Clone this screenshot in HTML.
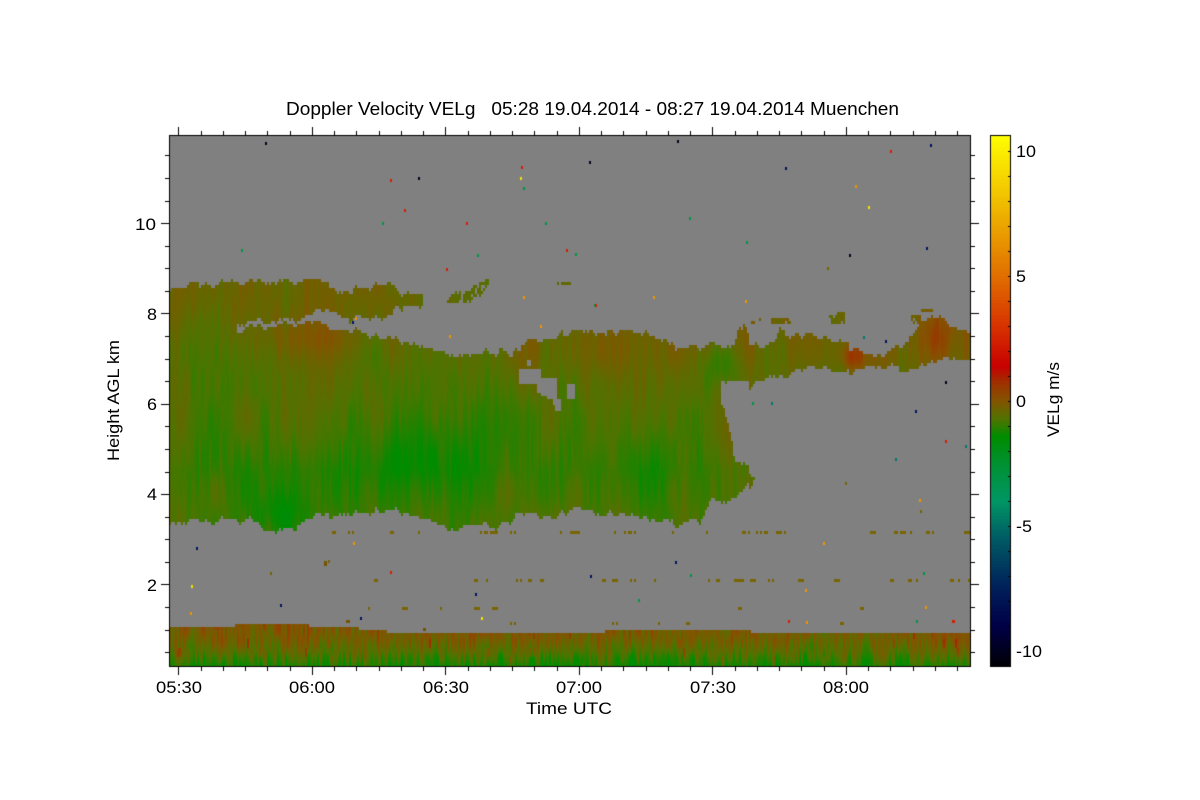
<!DOCTYPE html>
<html lang="en">
<head>
<meta charset="utf-8">
<title>Doppler Velocity VELg</title>
<style>
html,body{margin:0;padding:0;background:#fff;width:1200px;height:800px;overflow:hidden}
#c,#t{position:absolute;left:0;top:0;width:1200px;height:800px}
text{font-family:"Liberation Sans",sans-serif;fill:#000;font-size:17px}
</style>
</head>
<body>
<canvas id="c" width="1200" height="800"></canvas>
<svg id="t" viewBox="0 0 1200 800" xmlns="http://www.w3.org/2000/svg">
<text x="286" y="115" style="font-size:18px" textLength="613" lengthAdjust="spacingAndGlyphs" xml:space="preserve">Doppler Velocity VELg   05:28 19.04.2014 - 08:27 19.04.2014 Muenchen</text>
<text x="135" y="230" textLength="21" lengthAdjust="spacingAndGlyphs">10</text>
<text x="147" y="320" textLength="10" lengthAdjust="spacingAndGlyphs">8</text>
<text x="147" y="410" textLength="10" lengthAdjust="spacingAndGlyphs">6</text>
<text x="147" y="500" textLength="10" lengthAdjust="spacingAndGlyphs">4</text>
<text x="147" y="591" textLength="10" lengthAdjust="spacingAndGlyphs">2</text>
<text x="156" y="693" textLength="46" lengthAdjust="spacingAndGlyphs">05:30</text>
<text x="289" y="693" textLength="46" lengthAdjust="spacingAndGlyphs">06:00</text>
<text x="423" y="693" textLength="46" lengthAdjust="spacingAndGlyphs">06:30</text>
<text x="556" y="693" textLength="46" lengthAdjust="spacingAndGlyphs">07:00</text>
<text x="690" y="693" textLength="46" lengthAdjust="spacingAndGlyphs">07:30</text>
<text x="823" y="693" textLength="46" lengthAdjust="spacingAndGlyphs">08:00</text>
<text x="526" y="714" textLength="86" lengthAdjust="spacingAndGlyphs">Time UTC</text>
<text transform="translate(119,461) rotate(-90)" x="0" y="0" textLength="121" lengthAdjust="spacingAndGlyphs">Height AGL km</text>
<text x="1016" y="157" textLength="20" lengthAdjust="spacingAndGlyphs">10</text>
<text x="1016" y="282" textLength="10" lengthAdjust="spacingAndGlyphs">5</text>
<text x="1016" y="407" textLength="10" lengthAdjust="spacingAndGlyphs">0</text>
<text x="1016" y="532" textLength="16" lengthAdjust="spacingAndGlyphs">-5</text>
<text x="1016" y="657" textLength="26" lengthAdjust="spacingAndGlyphs">-10</text>
<text transform="translate(1059,437) rotate(-90)" x="0" y="0" textLength="75" lengthAdjust="spacingAndGlyphs">VELg m/s</text>
</svg>
<script>
(function(){
var c=document.getElementById('c').getContext('2d');
c.fillStyle='#fff';c.fillRect(0,0,1200,800);
c.fillStyle='#808080';c.fillRect(169,135,801,531);
var stops=[[10.7,255,255,0],[8,240,190,0],[5,225,110,0],[3,215,50,0],[1.4,200,0,0],[0.8,160,45,0],[0,130,85,0],[-0.7,80,115,0],[-1.4,0,140,0],[-2.5,0,145,50],[-4,0,150,100],[-5.5,0,90,100],[-7.5,0,30,90],[-9,0,0,70],[-10.7,0,0,0]];
function col(v){
  if(v>=stops[0][0])return 'rgb(255,255,0)';
  for(var i=1;i<stops.length;i++){
    if(v>=stops[i][0]){
      var a=stops[i-1],b=stops[i],t=(v-b[0])/(a[0]-b[0]);
      return 'rgb('+Math.round(b[1]+(a[1]-b[1])*t)+','+Math.round(b[2]+(a[2]-b[2])*t)+','+Math.round(b[3]+(a[3]-b[3])*t)+')';
    }
  }
  return '#000';
}
function h(i,j){var s=Math.sin(i*127.1+j*311.7)*43758.5453;return s-Math.floor(s);}
function sm(t){return t*t*(3-2*t);}
function n(x,y){
  var i=Math.floor(x),j=Math.floor(y),u=sm(x-i),w=sm(y-j);
  return (h(i,j)*(1-u)+h(i+1,j)*u)*(1-w)+(h(i,j+1)*(1-u)+h(i+1,j+1)*u)*w;
}
function gs(x,y,cx,cy,sx,sy,a){var dx=(x-cx)/sx,dy=(y-cy)/sy;return a*Math.exp(-dx*dx-dy*dy);}
function pw(t,p){
  if(t<=p[0][0])return p[0][1];
  for(var i=1;i<p.length;i++){if(t<=p[i][0]){var r=(t-p[i-1][0])/(p[i][0]-p[i-1][0]);return p[i-1][1]+(p[i][1]-p[i-1][1])*r;}}
  return p[p.length-1][1];
}
function path(pts){var q=new Path2D();q.moveTo(pts[0][0],pts[0][1]);for(var i=1;i<pts.length;i++)q.lineTo(pts[i][0],pts[i][1]);q.closePath();return q;}
var main=path([[169,289],[178,286],[195,284],[215,285],[235,283],[260,282],[285,283],[310,281],[332,283],[338,290],[350,289],[365,286],[393,285],[396,292],[410,294],[423,293],[423,306],[398,307],[394,312],[390,317],[382,320],[372,316],[360,315],[350,318],[338,312],[330,308],[315,314],[300,320],[280,322],[260,322],[240,323],[236,326],[236,333],[245,328],[275,327],[300,324],[320,324],[345,328],[365,332],[380,339],[400,341],[418,345],[440,352],[470,358],[490,352],[505,353],[520,352],[525,343],[548,338],[575,332],[600,333],[630,331],[650,333],[670,345],[690,348],[720,344],[735,345],[737,330],[745,328],[750,342],[765,348],[775,345],[780,332],[790,335],[800,337],[812,335],[820,338],[840,340],[850,347],[862,355],[875,358],[880,352],[890,352],[897,345],[905,342],[915,333],[920,325],[930,320],[940,318],[950,325],[970,330],[970,358],[945,358],[930,366],[915,370],[890,366],[880,366],[870,368],[855,372],[845,374],[830,368],[812,368],[790,372],[785,380],[760,381],[750,385],[735,380],[722,378],[720,385],[722,400],[727,415],[732,440],[735,460],[750,470],[756,478],[745,490],[735,498],[714,500],[700,520],[680,524],[640,516],[600,514],[575,509],[555,516],[520,515],[500,527],[480,525],[450,530],[430,520],[400,512],[350,512],[320,515],[300,525],[285,533],[265,530],[250,520],[210,522],[185,520],[169,525]]);
var holes=[
 path([[520,368],[540,368],[540,383],[520,383]]),
 path([[537,378],[556,378],[556,400],[561,400],[561,410],[556,410],[552,400],[537,392]]),
 path([[568,385],[575,385],[574,398],[567,398]]),
 path([[527,360],[531,360],[531,366],[527,366]])
];
var bits=[
 path([[447,303],[450,296],[460,290],[462,300],[455,303]]),
 path([[462,302],[465,292],[478,284],[488,279],[488,286],[480,296],[470,302]]),
 path([[828,314],[845,313],[846,323],[832,323]]),
 path([[908,315],[921,315],[922,322],[914,323]]),
 path([[921,309],[936,308],[936,311],[921,312]]),
 path([[750,320],[760,319],[760,322],[750,323]]),
 path([[772,318],[790,318],[790,323],[772,323]]),
 path([[558,282],[570,282],[570,284],[558,284]])
];
var band=path([[169,626],[300,625],[355,628],[400,633],[560,633],[620,631],[700,631],[800,632],[970,633],[970,666],[169,666]]);
function V(x,y){
  var b=pw(y,[[285,-0.38],[340,-0.42],[400,-0.72],[470,-1.02],[525,-0.78]]);
  if(x>500)b+=0.08;
  if(x>745)b+=0.1;
  b+=gs(x,y,720,365,22,25,-0.6);
  b+=gs(x,y,310,336,55,22,0.28);
  b+=gs(x,y,620,355,60,20,0.12);
  b+=gs(x,y,852,357,11,13,0.85);
  b+=gs(x,y,935,335,12,22,0.5);
  b+=gs(x,y,420,465,55,45,-0.4);
  b+=gs(x,y,655,460,18,50,-0.2);
  b+=gs(x,y,280,515,28,25,-0.5);
  b+=gs(x,y,190,345,30,40,-0.3);
  b+=gs(x,y,722,460,18,60,0.35);
  b+=(n(x/2.5,y/35)-0.5)*0.42+(n(x/22,y/70)-0.5)*0.5;
  return b;
}
function VB(x,y){
  var b=pw(y,[[626,-0.02],[640,-0.22],[652,-0.6],[666,-1.2]]);
  b+=(n(x/2,y/14)-0.5)*1.0+(n(x/18,y/30)-0.5)*0.4;
  if(h(Math.floor(x/2),Math.floor(y/9))>0.985)b+=0.7;
  return b;
}
for(var y=135;y<666;y+=3){
  for(var x=169;x<970;x+=2){
    var cx=x+1,cy=y+1.5,v=null;
    if(cy>=620){if(c.isPointInPath(band,cx,cy))v=VB(cx,cy);}
    else{
      var jy=cy+(n(x/5,3.3)-0.5)*9+(h(x,9)-0.5)*3;
      if(c.isPointInPath(main,cx,jy)){
        v=V(cx,cy);
        for(var k=0;k<holes.length;k++)if(c.isPointInPath(holes[k],cx,cy))v=null;
      }else if(cy<330){
        for(var m=0;m<bits.length;m++)if(c.isPointInPath(bits[m],cx,cy)&&h(x,y)>0.2){v=V(cx,cy);break;}
      }
    }
    if(v!==null){c.fillStyle=col(v);c.fillRect(x,y,2,3);}
  }
}
/* horizontal dashed olive lines */
function dash(y0,x0,x1,thr){
  for(var x=x0;x<x1;x+=2){
    if(h(Math.floor(x/6),y0)>thr&&h(x,y0+1)>0.45){c.fillStyle='rgb(120,100,0)';c.fillRect(x,y0,2,3);}
  }
}
dash(531,300,970,0.68);dash(579,370,970,0.8);dash(607,350,970,0.93);dash(622,420,970,0.93);
/* speckle */
var R='rgb(215,30,0)',O='rgb(235,150,0)',G='rgb(0,150,70)',K='rgb(5,5,30)',N='rgb(0,20,100)',Y='rgb(245,225,0)',T='rgb(0,120,110)',L='rgb(115,100,0)';
var sp=[[265,142,K],[521,166,R],[589,161,K],[677,140,K],[785,167,N],[890,150,R],[930,144,N],[390,179,R],[418,177,K],[520,177,Y],[523,187,G],[404,209,R],[382,222,G],[466,222,R],[545,222,G],[241,249,G],[566,249,R],[575,253,G],[446,268,R],[689,217,G],[855,185,O],[868,206,Y],[746,241,G],[849,254,K],[926,247,N],[827,267,L],[477,254,G],[594,304,G],[595,304,R],[745,300,O],[653,296,O],[523,296,O],[449,335,O],[540,325,O],[352,321,N],[355,317,O],[196,547,N],[191,585,Y],[190,612,O],[280,604,N],[360,617,N],[390,571,R],[353,542,O],[475,593,N],[481,617,Y],[823,542,O],[805,589,O],[675,561,N],[945,440,R],[965,445,T],[915,410,N],[945,381,K],[895,458,T],[919,499,O],[845,482,L],[752,402,G],[771,402,T],[885,340,N],[863,336,T],[590,575,N],[690,574,G],[638,599,G],[952,620,R],[953,620,R],[916,620,G],[925,606,O],[788,620,R],[806,621,O],[920,510,L],[923,572,G],[328,560,L],[270,572,L]];
sp.forEach(function(p){c.fillStyle=p[2];c.fillRect(p[0],p[1],2,3);});
c.fillStyle='rgb(115,85,0)';c.fillRect(324,561,3,5);c.fillRect(346,620,4,3);c.fillRect(423,628,3,3);
/* colourbar */
for(var yy=135;yy<666;yy+=3){c.fillStyle=col((401-yy-1)/25);c.fillRect(990,yy,20,3);}
/* frames and ticks */
c.fillStyle='#000';
function fr(x0,y0,x1,y1){c.fillRect(x0,y0,x1-x0+1,1);c.fillRect(x0,y1,x1-x0+1,1);c.fillRect(x0,y0,1,y1-y0+1);c.fillRect(x1,y0,1,y1-y0+1);}
fr(169,135,970,666);fr(990,135,1010,666);
for(var i=0;i<36;i++){
  var tx=Math.round(178.3+i*22.25),l=(i%6==0)?8:4;
  c.fillRect(tx,135-l,1,l);c.fillRect(tx,667,1,l);
}
for(var j=0;j<24;j++){
  var ky=0.5+j*0.5,ty=Math.round(675.8-ky*45.17)-1,maj=(j%4==3);
  if(ty<=135||ty>=666)continue;
  var ln=maj?8:4;
  c.fillRect(169-ln,ty,ln,1);c.fillRect(971,ty,ln,1);
}
for(var d=-10;d<=10;d++){
  var by=401-d*25;
  c.fillRect(1008,by,2,1);
}
})();
</script>
</body>
</html>
